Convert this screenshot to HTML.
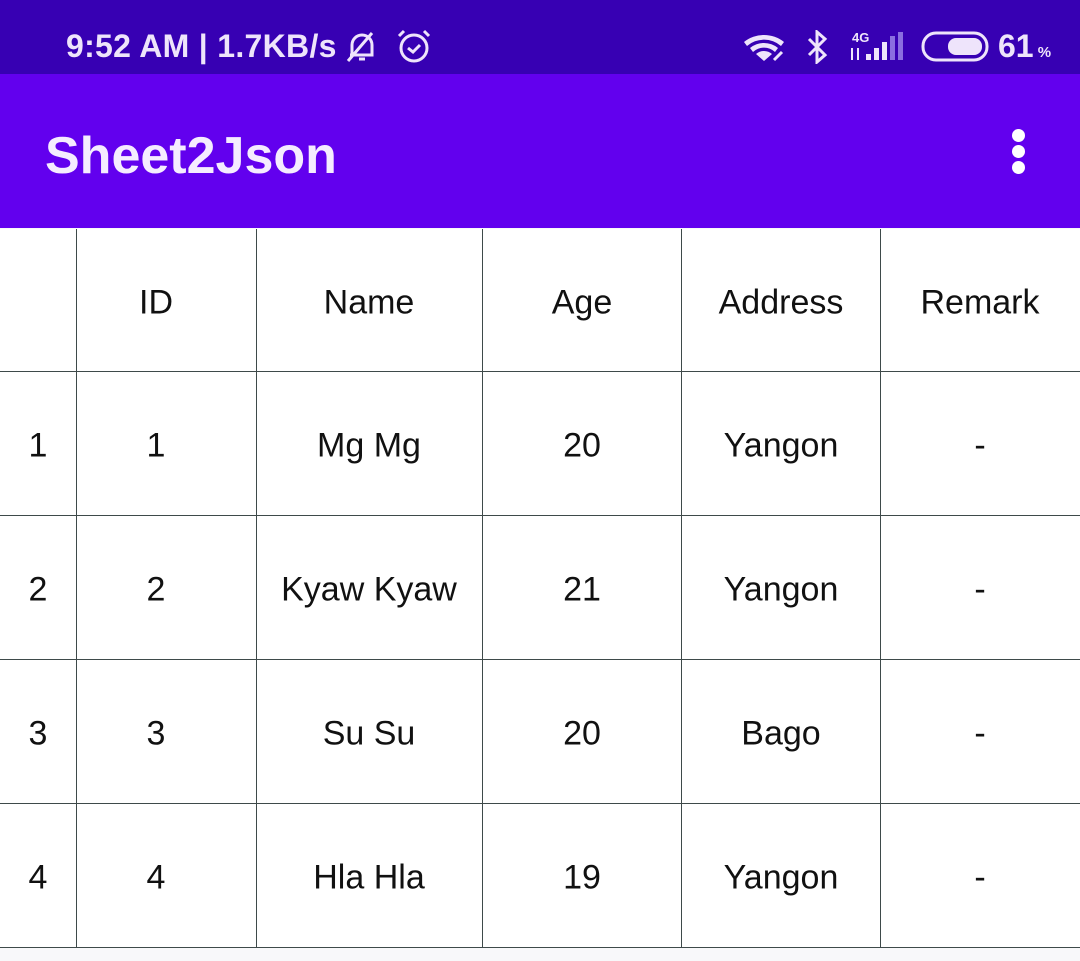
<!DOCTYPE html>
<html><head><meta charset="utf-8"><style>
*{margin:0;padding:0;box-sizing:border-box}
body{width:1080px;height:961px;background:#f8f8fa;font-family:"Liberation Sans",sans-serif;position:relative;overflow:hidden}
#sb{position:absolute;left:0;top:0;width:1080px;height:74px;background:#3700b3;color:#eee4fb}
#ab{position:absolute;left:0;top:74px;width:1080px;height:154px;background:#6200ee}
#title{position:absolute;left:45px;top:126px;font-size:52px;font-weight:bold;color:#f5ecff;line-height:60px}
#tbl{position:absolute;left:0;top:229px;width:1080px;height:719px;background:#fff}
.v{position:absolute;top:0;width:1px;height:719px;background:#3e4a4a}
.h{position:absolute;left:0;height:1px;width:1080px;background:#3e4a4a}
.c{position:absolute;font-size:34px;color:#111;transform:translate(-50%,-50%);white-space:nowrap}
.dot{position:absolute;left:1012px;width:13px;height:13px;border-radius:50%;background:#fff}
</style></head><body>
<div id="sb">
<div style="position:absolute;left:66px;top:28px;font-size:32px;font-weight:bold;line-height:36px;letter-spacing:0.3px">9:52 AM | 1.7KB/s</div>
<svg style="position:absolute;left:342px;top:29px" width="40" height="36" viewBox="0 0 40 36" fill="none" stroke="#eee4fb" stroke-width="3"><path d="M10 26 V16 a10 10 0 0 1 20 0 V26 H8 M17 30 h6 M6 32 L30 4"/></svg>
<svg style="position:absolute;left:395px;top:28px" width="38" height="38" viewBox="0 0 38 38" fill="none" stroke="#eee4fb" stroke-width="3"><circle cx="19" cy="20" r="13"/><path d="M13 20 l5 4 l7-7 M4 8 l5-5 M34 8 l-5-5"/></svg>
<svg style="position:absolute;left:742px;top:30px" width="50" height="36" viewBox="0 0 50 36" fill="#eee4fb"><path d="M2 12 a32 32 0 0 1 40 0 l-3 4 a26 26 0 0 0-34 0z M8 18 a22 22 0 0 1 28 0 l-3 4 a16 16 0 0 0-22 0z M14 24 a12 12 0 0 1 16 0 l-8 7z"/><path d="M32 30 l8-8" stroke="#eee4fb" stroke-width="3"/></svg>
<svg style="position:absolute;left:806px;top:30px" width="24" height="34" viewBox="0 0 24 34" fill="none" stroke="#eee4fb" stroke-width="3"><path d="M3 9 L19 25 L11 32 V2 L19 9 L3 25"/></svg>
<div style="position:absolute;left:852px;top:30px;font-size:13px;font-weight:bold">4G</div>
<svg style="position:absolute;left:848px;top:30px" width="60" height="32" viewBox="0 0 60 32"><rect x="18" y="24" width="5" height="6" fill="#eee4fb"/><rect x="26" y="18" width="5" height="12" fill="#eee4fb"/><rect x="34" y="12" width="5" height="18" fill="#eee4fb"/><rect x="42" y="6" width="5" height="24" fill="#8a6ee0"/><rect x="50" y="2" width="5" height="28" fill="#8a6ee0"/><path d="M4 18 v12 M10 18 v12" stroke="#eee4fb" stroke-width="2"/></svg>
<svg style="position:absolute;left:921px;top:31px" width="70" height="32" viewBox="0 0 70 32"><rect x="2" y="2" width="64" height="27" rx="13" fill="none" stroke="#eee4fb" stroke-width="3"/><rect x="27" y="7" width="34" height="17" rx="8" fill="#eee4fb"/></svg>
<div style="position:absolute;left:998px;top:28px;font-size:32px;font-weight:bold;line-height:36px">61<span style="font-size:15px"> %</span></div>
</div>
<div id="ab"><div class="dot" style="top:55px"></div><div class="dot" style="top:71px"></div><div class="dot" style="top:87px"></div></div>
<div id="title">Sheet2Json</div>
<div id="tbl">
<div class="v" style="left:76px"></div><div class="v" style="left:256px"></div><div class="v" style="left:482px"></div><div class="v" style="left:681px"></div><div class="v" style="left:880px"></div>
<div class="h" style="top:142px"></div><div class="h" style="top:286px"></div><div class="h" style="top:430px"></div><div class="h" style="top:574px"></div><div class="h" style="top:718px"></div>
<div class="c" style="left:156px;top:74px">ID</div><div class="c" style="left:369px;top:74px">Name</div><div class="c" style="left:582px;top:74px">Age</div><div class="c" style="left:781px;top:74px">Address</div><div class="c" style="left:980px;top:74px">Remark</div>
<div class="c" style="left:38px;top:217px">1</div><div class="c" style="left:156px;top:217px">1</div><div class="c" style="left:369px;top:217px">Mg Mg</div><div class="c" style="left:582px;top:217px">20</div><div class="c" style="left:781px;top:217px">Yangon</div><div class="c" style="left:980px;top:217px">-</div>
<div class="c" style="left:38px;top:361px">2</div><div class="c" style="left:156px;top:361px">2</div><div class="c" style="left:369px;top:361px">Kyaw Kyaw</div><div class="c" style="left:582px;top:361px">21</div><div class="c" style="left:781px;top:361px">Yangon</div><div class="c" style="left:980px;top:361px">-</div>
<div class="c" style="left:38px;top:505px">3</div><div class="c" style="left:156px;top:505px">3</div><div class="c" style="left:369px;top:505px">Su Su</div><div class="c" style="left:582px;top:505px">20</div><div class="c" style="left:781px;top:505px">Bago</div><div class="c" style="left:980px;top:505px">-</div>
<div class="c" style="left:38px;top:649px">4</div><div class="c" style="left:156px;top:649px">4</div><div class="c" style="left:369px;top:649px">Hla Hla</div><div class="c" style="left:582px;top:649px">19</div><div class="c" style="left:781px;top:649px">Yangon</div><div class="c" style="left:980px;top:649px">-</div>
</div>
</body></html>
